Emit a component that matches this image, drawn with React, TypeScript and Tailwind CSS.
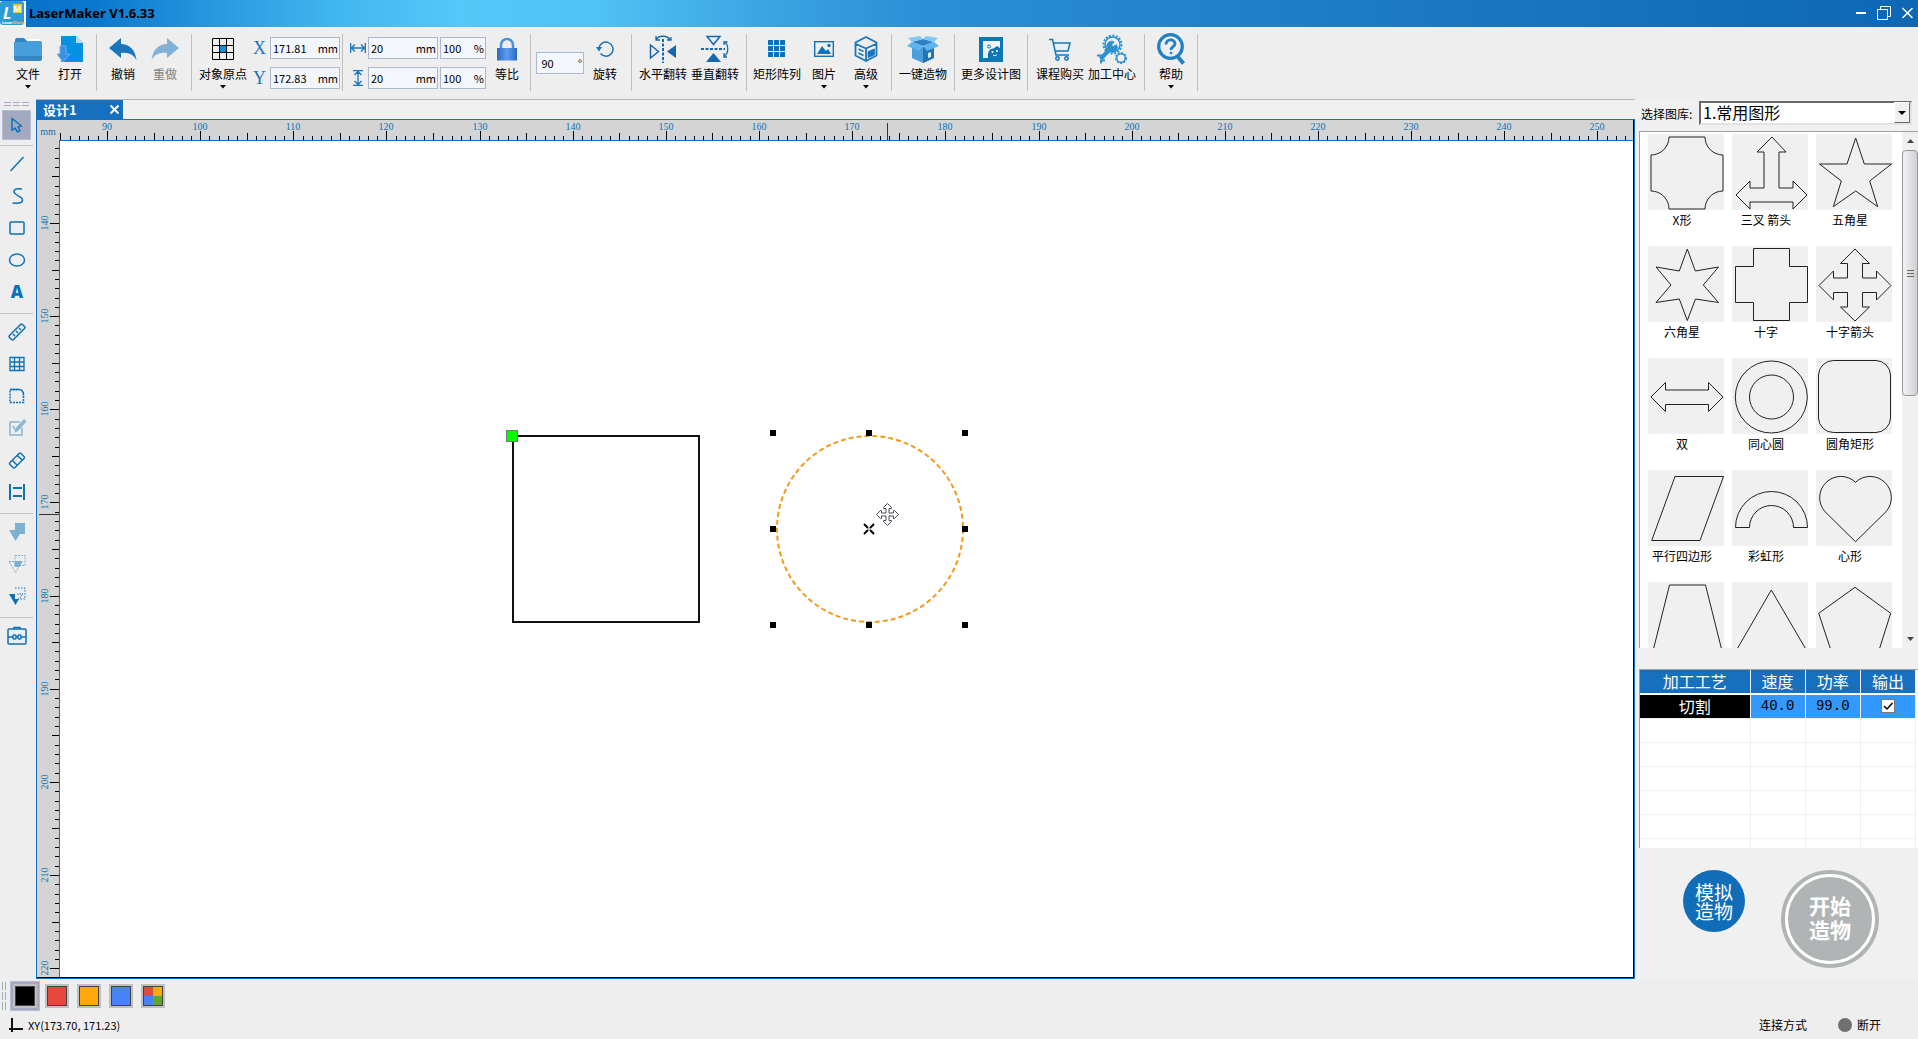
import { useState } from 'react'
import type { ReactNode } from 'react'

const BLUE = '#0c72b8'
const PX_PER_MM = 9.315

/* ---------- toolbar icons ---------- */

const FolderIcon = () => (
  <svg width="28" height="24" viewBox="0 0 28 24">
    <path d="M1 3q0-2 2-2h7l3 3h12q2 0 2 2v4H1z" fill="#2b86c8" />
    <path d="M13 2h12v5H13z" fill="#fff" />
    <path d="M0 5h12l2-1h12q2 0 2 2v15q0 3-3 3H3q-3 0-3-3z" fill="#469edb" />
    <path d="M0 19h28v2q0 3-3 3H3q-3 0-3-3z" fill="#3587c4" />
  </svg>
)

const OpenIcon = () => (
  <svg width="26" height="28" viewBox="0 0 26 28">
    <path d="M4 1h15l7 7v19H4z" fill="#0592e2" />
    <path d="M19 1l7 7h-7z" fill="#b9dcf2" />
    <path d="M3 11h6v8h4l-7 8-6-8h3z" fill="#3d8fe0" stroke="#6db0ea" />
  </svg>
)

const ReplyArrow = ({ color, flip }: { color: string; flip?: boolean }) => (
  <svg width="28" height="22" viewBox="0 0 28 22">
    <path
      d="M0 10L12 0v6c8 0 14 5 15.5 16-3-5-7-8-15.5-7v5z"
      fill={color}
      transform={flip ? 'translate(28 0) scale(-1 1)' : undefined}
    />
  </svg>
)

const OriginIcon = () => (
  <svg width="22" height="22" viewBox="0 0 22 22" fill="none" stroke="#000">
    <rect x="8" y="8" width="6" height="6" fill="#0592e2" stroke="none" />
    <path d="M.5.5h21v21H.5zM7.5.5v21M14.5.5v21M.5 7.5h21M.5 14.5h21" />
  </svg>
)

const WidthIcon = () => (
  <svg width="16" height="10" viewBox="0 0 16 10" fill="none" stroke="#1a75bc" strokeWidth="1.3">
    <path d="M.7 0v10M15.3 0v10M2 5h12M5 1.5L1.5 5 5 8.5M11 1.5L14.5 5 11 8.5" />
  </svg>
)

const HeightIcon = () => (
  <svg width="10" height="16" viewBox="0 0 10 16" fill="none" stroke="#1a75bc" strokeWidth="1.3">
    <path d="M0 .7h10M0 15.3h10M5 2v12M1.5 5L5 1.5 8.5 5M1.5 11L5 14.5 8.5 11" />
  </svg>
)

const LockIcon = () => (
  <svg width="20" height="24" viewBox="0 0 20 24">
    <defs>
      <linearGradient id="lock">
        <stop offset="0" stopColor="#2b68c0" />
        <stop offset=".5" stopColor="#5a9ef0" />
        <stop offset="1" stopColor="#2b68c0" />
      </linearGradient>
    </defs>
    <path d="M4 12V8a6 6 0 0 1 12 0v4" fill="none" stroke="#4a90dc" strokeWidth="2.5" />
    <rect y="11" width="20" height="12.5" fill="url(#lock)" />
  </svg>
)

const RotateIcon = () => (
  <svg width="18" height="18" viewBox="0 0 18 18">
    <path d="M3 8.5a7 7 0 1 1 1.5 5" fill="none" stroke="#1a75bc" strokeWidth="1.5" />
    <path d="M0 7h6l-3 4.5z" fill="#1a75bc" />
  </svg>
)

const FlipHorizontalIcon = () => (
  <svg width="28" height="28" viewBox="0 0 28 28" fill="none" stroke="#1668ac" strokeWidth="1.5">
    <path d="M1.5 10v13l8-6.5z" />
    <path d="M27 10v13l-9-6.500z" fill="#1668ac" stroke="none" />
    <path d="M14 4v24" strokeDasharray="3 1.5" strokeWidth="2" />
    <path d="M7 5c2-5 12-5 14 0M7 1v4h4M18 5h4V2" strokeWidth="1.3" />
  </svg>
)

const FlipVerticalIcon = () => (
  <svg width="28" height="28" viewBox="0 0 28 28" fill="none" stroke="#1668ac" strokeWidth="1.5">
    <path d="M6 1.500h13l-6.500 8z" />
    <path d="M5 27h15l-7.500-9z" fill="#1668ac" stroke="none" />
    <path d="M0 14h24" strokeDasharray="3 1.5" strokeWidth="2" />
    <path d="M23 7c5 2 5 12 0 14M26.500 7H23v3M23 18v4h3" strokeWidth="1.3" />
  </svg>
)

const ArrayIcon = () => (
  <svg width="18" height="18" viewBox="0 0 18 18" fill="#1170b8">
    {[0, 6, 12].map(y => [0, 6, 12].map(x => <rect key={`${x}-${y}`} x={x} y={y} width="5" height="5" />))}
  </svg>
)

const ImageIcon = () => (
  <svg width="20" height="16" viewBox="0 0 20 16">
    <rect x=".7" y=".7" width="18.6" height="14.6" fill="none" stroke="#1170b8" strokeWidth="1.4" />
    <path d="M3 13l5-8 4 5 2-2 3 5z" fill="#1170b8" />
    <circle cx="15" cy="4.5" r="1.7" fill="#1170b8" />
  </svg>
)

const CubeIcon = () => (
  <svg width="24" height="26" viewBox="0 0 24 26" fill="none" stroke="#1a75bc" strokeWidth="1.8" strokeLinejoin="round">
    <path d="M12 1l10.5 5.5v13L12 25 1.5 19.5v-13zM2 8l10 4.5L22 8M12 12.5V25" />
    <path d="M4.5 13l5 2.5M4.5 17l5 2.5" strokeWidth="1.5" />
    <path d="M14.5 16l5.5-2.5v5L14.5 21z" fill="#1a75bc" />
  </svg>
)

const BoxIcon = () => (
  <svg width="32" height="27" viewBox="0 0 32 27">
    <path d="M5 7l11 4 11-4v15l-11 5-11-5z" fill="#4a9edc" />
    <path d="M16 11l11-4v15l-11 5z" fill="#2673b4" />
    <path d="M5 6l11 4 11-4-11-3z" fill="#2f80c0" />
    <path d="M5 6l11 4-4 5-12-5zM27 6l-11 4 4 5 12-5z" fill="#5cb4f0" />
    <path d="M5 6L1 2l12-2 3 3zM27 6l4-4-12-2-3 3z" fill="#7fc8f8" />
    <path d="M21 17l3-1v5l-3 1z" fill="#d6ebfa" />
  </svg>
)

const GalleryIcon = () => (
  <svg width="24" height="25" viewBox="0 0 24 25">
    <path d="M0 0h24v25H0z" fill="#0e77b8" />
    <path d="M4 4h17v7l-3-2-7 5-2 7H4z" fill="#f0f4f8" />
    <circle cx="10" cy="9.5" r="1.5" fill="none" stroke="#0e77b8" />
    <path d="M9 21c-1-8 3-11 9-9 3 0 3 9-2 9z" fill="#0e77b8" />
    <circle cx="13.5" cy="15" r="1" fill="#fff" />
    <circle cx="18" cy="14" r="1" fill="#fff" />
    <path d="M14 18q2 2 4-.5" fill="none" stroke="#fff" />
  </svg>
)

const CartIcon = () => (
  <svg width="22" height="23" viewBox="0 0 22 23" fill="none" stroke="#1078b8" strokeWidth="1.5">
    <path d="M0 1.5h3.5L7 17h13M4.500 5h16.500l-2 8H6.500" />
    <circle cx="8.5" cy="20.500" r="1.7" />
    <circle cx="17.5" cy="20.500" r="1.7" />
  </svg>
)

const GearsIcon = () => (
  <svg width="30" height="30" viewBox="0 0 30 30" fill="none" stroke="#2b90d0">
    <circle cx="15.5" cy="10.5" r="7.5" strokeWidth="1.5" />
    <circle cx="15.5" cy="10.5" r="9" strokeWidth="2" strokeDasharray="2 1.5" />
    <path d="M3.500 25l9-9.500" strokeWidth="4" />
    <path d="M0 21.500h4v3M4 29.500v-3h4" strokeWidth="2" />
    <path d="M12 16a4.500 4.500 0 0 1 5-8l-2.500 3 1.500 1.800 3.500-2a4.500 4.500 0 0 1-6.500 6z" fill="#2b90d0" />
    <circle cx="24" cy="24" r="4.3" strokeWidth="1.5" />
    <circle cx="24" cy="24" r="5.3" strokeWidth="1.5" strokeDasharray="2 1.5" />
  </svg>
)

const HelpIcon = () => (
  <svg width="28" height="32" viewBox="0 0 28 32" fill="none" stroke="#2080c4">
    <circle cx="13.5" cy="13.5" r="11.8" strokeWidth="3.2" />
    <path d="M21 24l5.5 6.5" strokeWidth="4" />
    <path d="M9 11.5c0-6 9-6 9-.8 0 3-4 3-4 6.300" strokeWidth="2.8" />
    <circle cx="14" cy="20" r="1" fill="#2080c4" />
  </svg>
)

/* ---------- side tool icons, all on a 26px grid ---------- */

const TOOL_GROUPS: { name: string; icon: ReactNode }[][] = [
  [
    { name: '直线', icon: <path d="M6.5 20L19.5 6" /> },
    { name: '曲线', icon: <path d="M18 6c-8-1-10 2-6.5 5 5 4 7 3 7 6 0 3-3 3.500-10 3" /> },
    { name: '矩形', icon: <rect x="6" y="7" width="14" height="12" rx="1" /> },
    { name: '椭圆', icon: <ellipse cx="13" cy="13" rx="7.5" ry="6" /> },
    {
      name: '文字',
      icon: (
        <text x="13" y="19" textAnchor="middle" fontSize="17" fontWeight="800" fill={BLUE} stroke="none" fontFamily="Open Sans, sans-serif">
          A
        </text>
      ),
    },
  ],
  [
    { name: '测量', icon: <path d="M5.5 16.5l11-11q1-1 2 0l2 2q1 1 0 2l-11 11q-1 1-2 0l-2-2q-1-1 0-2zM9 15l2 2M12 12l2 2M15 9l2 2" /> },
    { name: '网格', icon: <path d="M6 6.5h14v13H6zM10.5 6.5v13M15.5 6.5v13M6 11h14M6 15.5h14" strokeWidth="1.3" /> },
    {
      name: '圆角',
      icon: (
        <>
          <path d="M14 6.5H6v13h13.500V12" strokeDasharray="2 1" />
          <path d="M6 6.500h9q4.500 0 4.500 6" />
        </>
      ),
    },
    {
      name: '编辑',
      icon: (
        <g opacity=".45">
          <path d="M16 7H6v13h12v-7M9 11l3 5 8-10" />
          <path d="M12 16l1-3 7-8 1.5 1.5-7 8z" />
        </g>
      ),
    },
    { name: '橡皮', icon: <path d="M6 15.5l9-9q1-1 2 0l3 3q1 1 0 2l-9 9q-1 1-2 0l-3-3q-1-1 0-2zM8.5 13.5l4.5 4.5M13.5 8.5l4.5 4.5" /> },
    { name: '间距', icon: <path d="M6 5v16M20 5v16M9 9h9M9 17h9" strokeWidth="2" /> },
  ],
  [
    { name: '并集', icon: <path d="M11 4h10v11h-5l-4.500 7L5 11h6z" fill={BLUE} stroke="none" opacity=".5" /> },
    {
      name: '交集',
      icon: (
        <g opacity=".5" strokeWidth="1">
          <path d="M11 4.500h10v10H11zM5 10.500h13l-6.500 11z" strokeDasharray="2 1" />
          <path d="M11 10.500h7l-3 5h-4z" fill={BLUE} />
        </g>
      ),
    },
    {
      name: '差集',
      icon: (
        <g strokeWidth="1">
          <path d="M11 5h10v11H14" strokeDasharray="1.5 1.5" />
          <path d="M5 11h6v5h4l-3.5 6z" fill={BLUE} stroke="none" />
          <path d="M13 11h6l-4 5" strokeDasharray="1.5 1" />
        </g>
      ),
    },
  ],
  [
    {
      name: '工具箱',
      icon: (
        <>
          <rect x="4" y="6" width="18" height="15" rx="1" />
          <path d="M10 6V4.500h6V6M4 14h5M12 14h2M17 14h5" />
          <rect x="9" y="12" width="3" height="4" rx="1" />
          <rect x="14" y="12" width="3" height="4" rx="1" />
        </>
      ),
    },
  ],
]

/* ---------- shape library, drawn on 76x76 tiles ---------- */

const SHAPES: { name: string; hidden?: boolean; d: string }[] = [
  { name: 'X形', d: 'M21 3H57A18 18 0 0 0 75 21V57A18 18 0 0 0 57 75H21A18 18 0 0 0 3 57V21A18 18 0 0 0 21 3Z' },
  { name: '三叉 箭头', d: 'M40 3L54 18H47V54H61V47L75 61L61 75V68H18V75L4 61L18 47V54H32V18H25Z' },
  { name: '五角星', d: 'M39.7 4L48.3 30H75.5L53.7 47L61.7 72.7L39.7 57L17.3 72.7L25.3 47L3.5 30H31Z' },
  { name: '六角星', d: 'M39.3 3L47.3 25L70.5 21L55.3 39L70.5 56.5L47.5 53L39.3 74.5L31.3 53L8 56.5L23 39L8 21L31.3 25Z' },
  { name: '十字', d: 'M21.5 2.5H57.5V20.5H75.5V56.5H57.5V74.5H21.5V56.5H3.5V20.5H21.5Z' },
  { name: '十字箭头', d: 'M39 3L53.5 17.5H46.5V32H60.5V25L75 39.5L60.5 54V46.5H46.5V61H53.5L39 75L24.5 61H31.5V46.5H17.5V54L3 39.5L17.5 25V32H31.5V17.5H24.5Z' },
  { name: '双', d: 'M3 39L17.5 24.5V32H60.5V24.5L75 39L60.5 53.5V46.5H17.5V53.5Z' },
  { name: '同心圆', d: 'M3.3 39a36 36 0 1 1 72 0a36 36 0 1 1-72 0M17.5 39a22 22 0 1 1 44 0a22 22 0 1 1-44 0' },
  { name: '圆角矩形', d: 'M17.5 2.5H60A15 15 0 0 1 74.5 17V60A15 15 0 0 1 60 74.5H17.5A15 15 0 0 1 2.5 60V17A15 15 0 0 1 17.5 2.5Z' },
  { name: '平行四边形', d: 'M27 6.5H75.5L52 70.5H3.7Z' },
  { name: '彩虹形', d: 'M3.5 57.5A36 36 0 0 1 75.5 57.5H61.5A22 22 0 0 0 17.5 57.5Z' },
  { name: '心形', d: 'M39.5 12.3A21.2 21.2 0 0 0 9 41.7L39.5 71.7L70 41.7A21.2 21.2 0 0 0 39.5 12.3Z' },
  { name: '梯形', hidden: true, d: 'M21.5 3H57.5L75.5 75H3.5Z' },
  { name: '三角形', hidden: true, d: 'M39.3 8L75.5 70H3.4Z' },
  { name: '五边形', hidden: true, d: 'M39 5.3L74.7 31.3L61.5 73H16.5L2.7 31.3Z' },
]

const SWATCHES = [
  { name: '黑色', className: 'bg-black' },
  { name: '红色', className: 'bg-[#e6473d]' },
  { name: '橙色', className: 'bg-[#ffa90e]' },
  { name: '蓝色', className: 'bg-[#4683f5]' },
]

/* ---------- small pieces ---------- */

const Separator = () => <div className="mt-[7px] h-[57px] w-px shrink-0 bg-[#c0c0c0]" />

function ToolButton({ label, width = 'w-[42px]', arrow, disabled, children }: {
  label: string
  width?: string
  arrow?: boolean
  disabled?: boolean
  children: ReactNode
}) {
  return (
    <button className={`flex shrink-0 flex-col items-center ${width} ${disabled ? 'text-[#808080]' : 'text-black'}`}>
      <span className="flex h-8 items-center justify-center">{children}</span>
      <span className="mt-px whitespace-nowrap text-xs leading-4">{label}</span>
      {arrow && (
        <svg className="mt-[3px]" width="6" height="4" viewBox="0 0 6 4">
          <path d="M0 0h6L3 3.5z" />
        </svg>
      )}
    </button>
  )
}

function Field({ label, value, unit, width = 'w-[70px]' }: { label: string; value: string; unit: string; width?: string }) {
  return (
    <label className={`flex h-[22px] items-center border border-[#a9b9d4] bg-[#f3f7fc] pb-px pl-[2px] pr-px text-[11px] leading-4 ${width}`}>
      <input aria-label={label} defaultValue={value} className="min-w-0 flex-1 bg-transparent outline-none" />
      <span>{unit}</span>
    </label>
  )
}

// tick length depends on whether the mark is a multiple of 10, of 5 or neither
const tickSize = (mm: number) => (mm % 10 === 0 ? 9 : mm % 5 === 0 ? 7 : 4)

const range = (from: number, to: number) => Array.from({ length: to - from + 1 }, (_, i) => from + i)

function HorizontalRuler() {
  return (
    <svg className="h-5 w-full" fill={BLUE} fontSize="10" fontFamily="Liberation Serif, serif" textAnchor="middle">
      <text x="11" y="15">mm</text>
      {range(85, 253).map(mm => {
        const x = Math.round(70 + (mm - 90) * PX_PER_MM)
        const size = tickSize(mm)
        return (
          <g key={mm}>
            <rect x={x} y={20 - size} width="1" height={size} fill="#000" />
            {mm % 10 === 0 && <text x={x} y="10">{mm}</text>}
          </g>
        )
      })}
      <rect x="850" y="3" width="1" height="17" fill="#333" />
    </svg>
  )
}

function VerticalRuler() {
  return (
    <svg className="h-full w-[22px] shrink-0" fill={BLUE} fontSize="10" fontFamily="Liberation Serif, serif" textAnchor="middle">
      {range(132, 220).map(mm => {
        const y = Math.round(83 + (mm - 140) * PX_PER_MM)
        const size = tickSize(mm)
        return (
          <g key={mm}>
            <rect x={22 - size} y={y} width={size} height="1" fill="#000" />
            {mm % 10 === 0 && <text transform={`translate(11 ${y}) rotate(-90)`}>{mm}</text>}
          </g>
        )
      })}
      <rect x="2" y="374" width="20" height="1" fill="#333" />
    </svg>
  )
}

function Drawing() {
  return (
    <svg className="h-full w-full bg-white">
      <rect x="453" y="295" width="186" height="186" fill="none" stroke="#111" strokeWidth="2" />
      <rect x="446.5" y="289.5" width="11" height="11" fill="#0f0" stroke="#777" />
      <circle cx="810" cy="388" r="93" fill="none" stroke="#f39a1d" strokeWidth="2" strokeDasharray="5 3" />
      {[292, 388, 484].map(y =>
        [713, 809, 905].map(x =>
          x === 809 && y === 388 ? null : <rect key={`${x}-${y}`} x={x - 3} y={y - 3} width="6" height="6" />
        )
      )}
      <path d="M804 383l4 4M814 383l-4 4M804 393l4-4M814 393l-4-4" stroke="#000" strokeWidth="2" />
      <rect x="808.5" y="387.5" width="1" height="1" />
      <path
        transform="translate(827.5 373.5)"
        d="M0-11L4-7V-6H1.500V-1.500H6V-4H7L11 0L7 4H6V1.500H1.500V6H4V7L0 11L-4 7V6H-1.500V1.500H-6V4H-7L-11 0L-7-4H-6V-1.500H-1.500V-6H-4V-7Z"
        fill="#fff"
        stroke="#4a4a60"
      />
    </svg>
  )
}

function TitleBar() {
  return (
    <header className="flex h-[27px] shrink-0 items-center bg-[linear-gradient(90deg,#0a6fc6_0%,#0a78ce_5%,#2292dc_10%,#40b4ee_17%,#55c8fa_24%,#50c2f5_31%,#3aa4e2_40%,#2b90d6_48%,#1c7cc4_70%,#0e67b4_100%)]">
      <svg width="26" height="26" viewBox="0 0 26 26" fontFamily="Open Sans, sans-serif" fontWeight="700">
        <path d="M0 0h26v26H0z" fill="#fff" />
        <rect width="24" height="24" rx="3" fill="#2c9bd6" />
        <rect x="13" y="3" width="9" height="9" fill="#f7c331" />
        <text x="17.5" y="10.5" fontSize="8" textAnchor="middle" fill="#fff">M</text>
        <text x="3" y="18" fontSize="16" fontStyle="italic" fill="#fff">L</text>
        <text x="2" y="22.5" fontSize="4" fill="#fff">Laser<tspan fill="#f7c331">Maker</tspan></text>
      </svg>
      <h1 className="ml-[3px] pb-[2px] font-['Noto_Sans'] text-[13px] font-bold leading-5 text-black">LaserMaker V1.6.33</h1>
      <div className="ml-auto flex items-center gap-[11px] pb-px pr-[5px]">
        <button aria-label="最小化"><svg width="10" height="14"><path d="M0 6h10v2H0z" fill="#fff" /></svg></button>
        <button aria-label="还原">
          <svg width="14" height="14" fill="none" stroke="#fff"><path d="M.5 3.5h10v10H.5zM3.5 3V.5h10v10H11" /></svg>
        </button>
        <button aria-label="关闭">
          <svg width="11" height="14" stroke="#fff" strokeWidth="1.5"><path d="M.5 2l10 10M10.5 2l-10 10" /></svg>
        </button>
      </div>
    </header>
  )
}

function Toolbar() {
  return (
    <nav className="flex h-[72px] shrink-0 overflow-hidden bg-[#eee] pl-[2px]">
      <div className="flex px-[5px] pt-[6px]">
        <ToolButton label="文件" arrow><FolderIcon /></ToolButton>
        <ToolButton label="打开"><OpenIcon /></ToolButton>
      </div>
      <Separator />
      <div className="flex px-[5px] pt-[6px]">
        <ToolButton label="撤销"><ReplyArrow color="#1a75bc" /></ToolButton>
        <ToolButton label="重做" disabled><ReplyArrow color="#84b2d6" flip /></ToolButton>
      </div>
      <Separator />
      <div className="flex pl-[5px] pr-[2px] pt-[6px]">
        <ToolButton label="对象原点" width="w-[52px]" arrow><OriginIcon /></ToolButton>
        <div className="flex w-[21px] flex-col gap-2 pt-1 text-center font-['Liberation_Serif'] text-lg leading-[22px] text-[#1a75bc]">
          <span>X</span>
          <span>Y</span>
        </div>
        <div className="flex flex-col gap-2 pt-1">
          <Field label="X" value="171.81" unit="mm" />
          <Field label="Y" value="172.83" unit="mm" />
        </div>
      </div>
      <Separator />
      <div className="flex pl-[7px] pr-[2px] pt-[6px]">
        <div className="flex w-[18px] flex-col gap-2 pr-[2px] pt-1">
          <span className="flex h-[22px] items-center justify-center"><WidthIcon /></span>
          <span className="flex h-[22px] items-center justify-center"><HeightIcon /></span>
        </div>
        <div className="grid grid-cols-[70px_46px] content-start gap-x-[2px] gap-y-2 pt-1">
          <Field label="宽度" value="20" unit="mm" />
          <Field label="宽度比例" value="100" unit="%" width="w-[46px]" />
          <Field label="高度" value="20" unit="mm" />
          <Field label="高度比例" value="100" unit="%" width="w-[46px]" />
        </div>
        <ToolButton label="等比"><LockIcon /></ToolButton>
      </div>
      <Separator />
      <div className="flex px-[5px] pt-[6px]">
        <div className="pt-[19px]"><Field label="角度" value=" 90" unit="°" width="w-[48px]" /></div>
        <ToolButton label="旋转"><RotateIcon /></ToolButton>
      </div>
      <Separator />
      <div className="flex px-[5px] pt-[6px]">
        <ToolButton label="水平翻转" width="w-[52px]"><FlipHorizontalIcon /></ToolButton>
        <ToolButton label="垂直翻转" width="w-[52px]"><FlipVerticalIcon /></ToolButton>
      </div>
      <Separator />
      <div className="flex px-1 pt-[6px]">
        <ToolButton label="矩形阵列" width="w-[52px]"><ArrayIcon /></ToolButton>
        <ToolButton label="图片" arrow><ImageIcon /></ToolButton>
        <ToolButton label="高级" arrow><CubeIcon /></ToolButton>
      </div>
      <Separator />
      <div className="flex px-[5px] pt-[6px]">
        <ToolButton label="一键造物" width="w-[52px]"><BoxIcon /></ToolButton>
      </div>
      <Separator />
      <div className="flex px-1 pt-[6px]">
        <ToolButton label="更多设计图" width="w-[64px]"><GalleryIcon /></ToolButton>
      </div>
      <Separator />
      <div className="flex px-[6px] pt-[6px]">
        <ToolButton label="课程购买" width="w-[52px]"><CartIcon /></ToolButton>
        <ToolButton label="加工中心" width="w-[52px]"><GearsIcon /></ToolButton>
      </div>
      <Separator />
      <div className="flex px-[5px] pt-[6px]">
        <ToolButton label="帮助" arrow><HelpIcon /></ToolButton>
      </div>
      <Separator />
    </nav>
  )
}

function SideTools() {
  return (
    <aside className="flex w-9 shrink-0 flex-col pr-[3px]">
      <div className="grid grid-cols-3 gap-x-[2px] gap-y-[2px] px-1 py-[3px]">
        {range(1, 6).map(i => <i key={i} className="h-px bg-[#a3a9bf]" />)}
      </div>
      <button aria-label="选择" className="mx-[2px] mb-[5px] mt-px flex h-[30px] items-center justify-center border border-[#b5bdd6] bg-[#a3a9bf]">
        <svg width="14" height="16" viewBox="0 0 14 16" fill="none" stroke={BLUE} strokeWidth="1.5" strokeLinejoin="round">
          <path d="M2 1.500v12l3-2.500 2.500 4 2.500-1.500-2-3.500 3.500-1z" />
        </svg>
      </button>
      {TOOL_GROUPS.map((group, i) => (
        <div key={i} className="flex flex-col border-t border-[#c0c0c0] pb-[5px] pt-[2px]">
          {group.map(tool => (
            <button key={tool.name} aria-label={tool.name} className="flex h-8 items-center justify-center">
              <svg width="26" height="26" viewBox="0 0 26 26" fill="none" stroke={BLUE} strokeWidth="1.5">
                {tool.icon}
              </svg>
            </button>
          ))}
        </div>
      ))}
    </aside>
  )
}

function Workspace() {
  return (
    <main className="flex min-w-0 flex-1 flex-col border-t border-[#b4b4b4]">
      <div className="flex h-[19px] shrink-0 bg-[#f0f0f0]">
        <div className="flex w-[87px] items-center justify-between bg-[#1770bf] pl-[7px] pr-1 text-[13px] font-bold leading-[18px] text-white">
          <span>设计1</span>
          <button aria-label="关闭设计">
            <svg width="9" height="9" stroke="#fff" strokeWidth="2"><path d="M.5.5l8 8M8.500.5l-8 8" /></svg>
          </button>
        </div>
      </div>
      <div className="flex min-h-0 flex-1 flex-col border border-[#1770bf]">
        <div className="flex min-h-0 flex-1 flex-col border-b border-r border-black bg-[#d4d4d4]">
          <HorizontalRuler />
          <div className="flex min-h-0 flex-1">
            <VerticalRuler />
            <div className="min-w-0 flex-1 border-l border-t border-[#1770bf]">
              <Drawing />
            </div>
          </div>
        </div>
      </div>
    </main>
  )
}

function ShapeLibrary() {
  return (
    <section className="flex min-h-0 flex-1 flex-col">
      <div className="flex h-8 shrink-0 items-start pr-[6px] pt-px">
        <label htmlFor="library" className="w-[60px] pl-[2px] pt-[6px] text-xs leading-4">选择图库:</label>
        <div className="relative flex-1">
          <select
            id="library"
            className="h-6 w-full appearance-none border-2 border-b-[#e3e3e3] border-l-[#696969] border-r-[#e3e3e3] border-t-[#696969] bg-white pb-[2px] pl-[2px] text-base leading-[18px]"
          >
            <option>1.常用图形</option>
          </select>
          <span className="pointer-events-none absolute bottom-[2px] right-[2px] top-[2px] flex w-4 items-center justify-center border border-b-[#696969] border-l-white border-r-[#696969] border-t-white bg-[#f0f0f0]">
            <svg width="8" height="4"><path d="M0 0h8L4 4z" /></svg>
          </span>
        </div>
      </div>
      <div className="flex min-h-0 flex-1 border-l border-t border-[#a0a0a0] bg-white">
        <div className="grid min-w-0 flex-1 auto-rows-[112px] grid-cols-[76px_76px_76px] gap-x-2 overflow-hidden pl-2 pt-[2px]">
          {SHAPES.map(shape => (
            <button key={shape.name} aria-label={shape.name} className="flex flex-col items-center">
              <svg className="bg-[#f0f0f0]" width="76" height="76" viewBox="0 0 76 76" fill="none" stroke="#222">
                <path d={shape.d} />
              </svg>
              {!shape.hidden && <span className="mt-[2px] pr-2 text-xs leading-4">{shape.name}</span>}
            </button>
          ))}
        </div>
        <div className="flex w-4 shrink-0 flex-col bg-[#f0f0f0]">
          <button aria-label="向上滚动" className="flex h-[18px] items-center justify-center">
            <svg width="7" height="4"><path d="M0 4h7L3.5 0z" fill="#444" /></svg>
          </button>
          <div className="flex h-[246px] flex-col items-center justify-center gap-[2px] rounded-sm border border-[#979797] bg-linear-to-r from-[#f4f4f4] to-[#cfcfd4]">
            <i className="h-px w-[7px] bg-[#666]" />
            <i className="h-px w-[7px] bg-[#666]" />
            <i className="h-px w-[7px] bg-[#666]" />
          </div>
          <button aria-label="向下滚动" className="mt-auto flex h-[18px] items-center justify-center">
            <svg width="7" height="4"><path d="M0 0h7L3.5 4z" fill="#444" /></svg>
          </button>
        </div>
      </div>
    </section>
  )
}

function ProcessTable() {
  const [output, setOutput] = useState(true)
  return (
    <div className="mt-[21px] h-[179px] shrink-0 overflow-hidden border-l border-t border-[#a0a0a0] bg-white pr-[2px]">
      <table className="w-full table-fixed border-collapse text-center text-base leading-5">
        <thead>
          <tr className="h-6 border-b-2 border-white bg-[#1770bf] text-white">
            <th className="w-[110px] border-r border-[#f0f0f0] p-0 pb-[2px] font-normal">加工工艺</th>
            <th className="border-r border-[#f0f0f0] p-0 pb-[2px] font-normal">速度</th>
            <th className="border-r border-[#f0f0f0] p-0 pb-[2px] font-normal">功率</th>
            <th className="border-r border-[#f0f0f0] p-0 pb-[2px] font-normal">输出</th>
          </tr>
        </thead>
        <tbody>
          <tr className="h-6 bg-[#3399ff]">
            <td className="border-r border-[#f0f0f0] bg-black text-white">切割</td>
            <td className="border-r border-[#f0f0f0] font-['Liberation_Mono'] text-sm">40.0</td>
            <td className="border-r border-[#f0f0f0] font-['Liberation_Mono'] text-sm">99.0</td>
            <td className="border-r border-[#f0f0f0]">
              <label className="flex justify-center">
                <input
                  type="checkbox"
                  aria-label="输出"
                  checked={output}
                  onChange={e => setOutput(e.target.checked)}
                  className="peer h-[14px] w-[14px] appearance-none border border-[#777] bg-white"
                />
                <svg className="pointer-events-none -ml-[14px] hidden h-[14px] w-[14px] peer-checked:block" fill="none" stroke="#000" strokeWidth="1.5">
                  <path d="M3 7l3 3 5.5-6" />
                </svg>
              </label>
            </td>
          </tr>
          {range(1, 6).map(row => (
            <tr key={row} className="h-6 border-t border-[#f0f0f0]">
              {range(1, 4).map(col => <td key={col} className="border-r border-[#f0f0f0]" />)}
            </tr>
          ))}
        </tbody>
      </table>
    </div>
  )
}

function Palette() {
  const [active, setActive] = useState('黑色')
  return (
    <div className="flex h-[34px] shrink-0 items-center gap-[2px] pl-[2px]">
      <div className="mr-[2px] grid grid-cols-2 gap-[2px]">
        {range(1, 6).map(i => <i key={i} className="h-2 w-px bg-[#a3a9bf]" />)}
      </div>
      {SWATCHES.map(s => (
        <button
          key={s.name}
          aria-label={s.name}
          onClick={() => setActive(s.name)}
          className={`flex h-[30px] w-[30px] items-center justify-center border ${active === s.name ? 'border-[#b5bdd6] bg-[#a3a9bf]' : 'border-transparent'}`}
        >
          <span className="flex h-6 w-6 items-center justify-center bg-[#c0c0c0]">
            <span className={`h-5 w-5 border border-[#444] ${s.className}`} />
          </span>
        </button>
      ))}
      <button aria-label="多色" className="flex h-[30px] w-[30px] items-center justify-center">
        <span className="flex h-6 w-6 items-center justify-center bg-[#c0c0c0]">
          <span className="grid h-5 w-5 grid-cols-2 border border-[#444]">
            <i className="bg-[#e6473d]" />
            <i className="bg-[#ffa90e]" />
            <i className="bg-[#4683f5]" />
            <i className="bg-[#5fa52e]" />
          </span>
        </span>
      </button>
    </div>
  )
}

export default function App() {
  return (
    <div className="flex h-screen flex-col overflow-hidden bg-[#eee] font-['Noto_Sans_CJK_SC',sans-serif] text-black">
      <TitleBar />
      <Toolbar />
      <div className="flex min-h-0 flex-1">
        <SideTools />
        <Workspace />
        <div className="flex w-[283px] shrink-0 flex-col bg-[#f0f0f0] pl-1">
          <ShapeLibrary />
          <ProcessTable />
          <div className="flex h-[131px] shrink-0 items-start gap-9 pl-11 pt-[22px]">
            <button className="flex h-[62px] w-[62px] items-center justify-center rounded-full bg-[#126db8] text-[19px] leading-[19px] text-white">
              <span>模拟<br />造物</span>
            </button>
            <button className="flex h-[98px] w-[98px] items-center justify-center rounded-full bg-[#b1b4b4]">
              <span className="flex h-[90px] w-[90px] items-center justify-center rounded-full border-[3px] border-white pb-1 text-[21px] font-bold leading-6 text-white">
                <span>开始<br />造物</span>
              </span>
            </button>
          </div>
        </div>
      </div>
      <Palette />
      <footer className="flex h-[26px] shrink-0 items-center pb-[2px] pl-2 pr-[37px] text-xs leading-4">
        <svg width="15" height="16" stroke="#111" strokeWidth="2"><path d="M4 1v14M1 12h14" /></svg>
        <span className="ml-[5px] text-[11px]">XY(173.70, 171.23)</span>
        <span className="ml-auto">连接方式</span>
        <span className="ml-[31px] h-[14px] w-[14px] rounded-full bg-[#707070]" />
        <span className="ml-[5px]">断开</span>
      </footer>
    </div>
  )
}
